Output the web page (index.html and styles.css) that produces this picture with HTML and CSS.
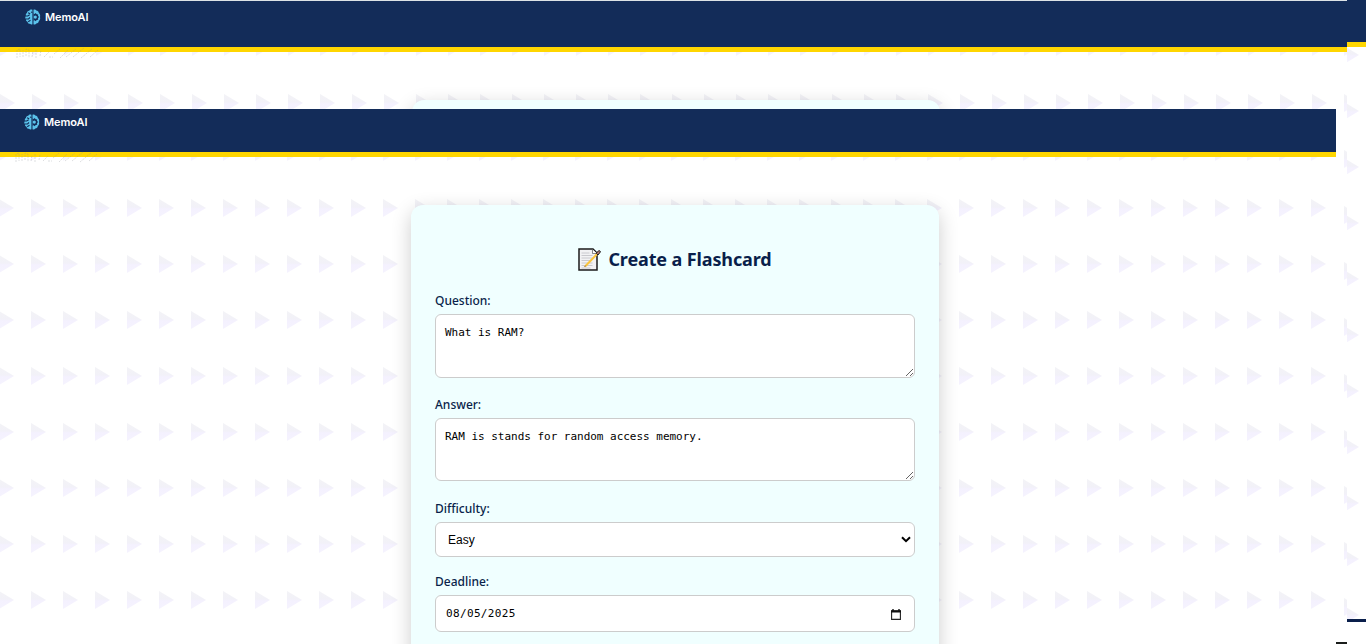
FILE: index.html
```
<!DOCTYPE html>
<html lang="en">
<head>
<meta charset="utf-8">
<title>MemoAI</title>
<link rel="stylesheet" href="styles.css">
</head>
<body>
<svg class="defs" width="0" height="0" aria-hidden="true">
  <defs>
    <linearGradient id="tri" x1="0" y1="0" x2="0" y2="1"><stop offset="0" stop-color="#f3f3f6"/><stop offset=".45" stop-color="#f2f1f8"/><stop offset=".55" stop-color="#f4f1fe"/><stop offset="1" stop-color="#f5f3fe"/></linearGradient>
    <pattern id="tiles" width="32" height="56" patternUnits="userSpaceOnUse"><path d="M0 38L15 47L0 56Z" fill="url(#tri)"/></pattern>
    <symbol id="brain" viewBox="0 0 16 16">
      <path d="M7.400.8C6.200 0 4.800.6 4.300 1.800 2.900 1.700 1.900 2.800 2 4.100.8 4.800.5 6 1 7c-1 .8-.9 2.200 0 3-.3 1.300.3 2.400 1.500 2.800.2 1.400 1.300 2.200 2.500 2 .7.8 1.700 1 2.400.5z" fill="#5bc2eb"/>
      <path d="M3 3.700l2.200 1M.5 7h2.200l2-1.200M1 10h2.500l1.500-1.500M3.200 12.700l2.300-1.400M7.400 3.500L6 3" fill="none" stroke="#132c59" stroke-width="1.100"/>
      <path d="M8.500.8c1-.6 2.300-.3 2.800.7 1.400 0 2.500 1 2.500 2.400 1.200.8 1.700 2.500 1.200 4.100.5 1.600 0 3.300-1.200 4.100 0 1.400-1.100 2.400-2.500 2.400-.5 1-1.800 1.300-2.800.7z" fill="#5bc2eb"/>
      <path d="M8.500 4.500l1.200.5 1-1 1 1.300 1.500.2-.2 1.600 1.200 1-1.200 1 .2 1.600-1.500.200-1 1.300-1-1-1.200.5z" fill="#132c59"/>
      <circle cx="10.300" cy="8.100" r="1.600" fill="#5bc2eb"/>
    </symbol>
    <symbol id="residue" viewBox="0 0 84 12">
      <path d="M1 11V3l3-1v8M7 10V3M10 9V2l3 1v8M16 10l1-6M20 11V3M24 9l1-6M28 10l5-5M33 10h4M38 7l6-5M44 11l8-8M50 10l10-8M57 10l11-9M65 11l11-9M74 10l8-7" fill="none" stroke="#8d9298" stroke-opacity=".3" stroke-width="1" stroke-dasharray="2 1"/>
    </symbol>
  </defs>
</svg>

<div class="layer layer-back">
  <svg class="tiles"><rect width="100%" height="100%" fill="url(#tiles)"/></svg>
  <header class="bar"></header>
  <div class="edge"></div>
</div>

<div class="layer layer-mid">
  <svg class="tiles"><rect width="100%" height="100%" fill="url(#tiles)"/></svg>
  <header class="bar"><svg class="logo"><use href="#brain"/></svg><span>MemoAI</span></header>
  <svg class="residue"><use href="#residue"/></svg>
  <main class="card"></main>
  <div class="edge"></div>
</div>

<div class="layer layer-front">
  <svg class="tiles"><rect width="100%" height="100%" fill="url(#tiles)"/></svg>
  <header class="bar"><svg class="logo"><use href="#brain"/></svg><span>MemoAI</span></header>
  <svg class="residue"><use href="#residue"/></svg>
  <main class="card">
    <h1 class="title">
      <svg class="memo" viewBox="0 0 23 23">
        <path d="M1 1h14l4 4v17H1z" fill="#f2f2f4" stroke="#1b1b1b" stroke-width="1.500"/>
        <path d="M14.500 1.500v4H19" fill="#fff" stroke="#555" stroke-width=".7"/>
        <path d="M3.500 5h8M3.500 7.500h11M3.500 10h11M3.500 12.500h10M3.500 15h11M3.500 17.500h11M3.500 20h9" stroke="#c4c4c9" stroke-width=".9"/>
        <path d="M20.500 4.500L9 16.500l-2 2" fill="none" stroke="#fbc53c" stroke-width="2"/>
        <path d="M7.600 17.600L6.500 19" stroke="#8a6c55"/>
        <path d="M18.300 5.300l2.200-2.500q1.500-.6 2 1L20 7z" fill="#b87d78" stroke="#1b1b1b" stroke-width="1"/>
      </svg>
      <span>Create a Flashcard</span>
    </h1>
    <label class="label" for="q">Question:</label>
    <textarea class="field area" id="q" spellcheck="false">What is RAM?</textarea>
    <label class="label" for="a">Answer:</label>
    <textarea class="field area area-answer" id="a" spellcheck="false">RAM is stands for random access memory.</textarea>
    <div class="label">Difficulty:</div>
    <div class="field select"><span>Easy</span><svg class="chevron" viewBox="0 0 10 7"><path d="M1 1.200l4 4 4-4" fill="none" stroke="#000" stroke-width="2"/></svg></div>
    <div class="label">Deadline:</div>
    <div class="field date"><span>08/05/2025</span><svg class="calendar" viewBox="0 0 10 11"><path d="M.6 2h8.800v8.400H.6z" fill="none" stroke="#222" stroke-width="1.100"/><path d="M0 1.200h10v2.300H0zM1.300 0h1.400v2H1.300zM7.300 0h1.400v2H7.300z" fill="#111"/></svg></div>
  </main>
</div>
</body>
</html>
```
FILE: styles.css
```
* { box-sizing: border-box; }
body { margin: 0; width: 1366px; height: 644px; position: relative; overflow: hidden; background: #fff; font-family: "Noto Sans", "Open Sans", sans-serif; }
.defs { position: absolute; }

/* Stacked page layers */
.layer { position: absolute; left: 0; overflow: hidden; background: #fff; }
.layer-back { top: 0; width: 1366px; height: 644px; }
.layer-mid { top: 0; width: 1347px; height: 644px; border-top: 1px solid #dde3e6; }
.layer-front { top: 109px; width: 1336px; height: 535px; }

.tiles { position: absolute; left: 0; width: 1400px; height: 700px; }
.layer-back .tiles { top: 8px; }
.layer-mid .tiles { top: -1px; }
.layer-front .tiles { top: -4px; left: -1px; }

.bar { position: relative; display: flex; align-items: flex-start; gap: 4px; height: 51px; padding: 8px 0 0 25px; background: #132c59; border-bottom: 5px solid #ffd600; color: #fff; font: 600 11px/16px Inter, sans-serif; letter-spacing: -.1px; }
.layer-back .bar { height: 47px; }
.layer-front .bar { height: 48px; padding: 5px 0 0 24px; }
.logo { width: 16px; height: 16px; }
.residue { position: absolute; left: 16px; top: 46px; width: 84px; height: 12px; }
.layer-front .residue { left: 15px; top: 42px; }

.edge { position: absolute; right: 0; }
.layer-back .edge { width: 19px; top: 619px; height: 25px; border-top: 3px solid #0a1f4b; background: #fff; }
.layer-mid .edge { width: 11px; top: 641px; height: 2px; background: #1a1d1b; }

.card { position: relative; width: 528px; height: 600px; margin: 48px 0 0 411px; padding: 40px 24px; border-radius: 12px; background: #f0ffff; box-shadow: 0 6px 20px rgba(0, 0, 0, .2); color: #0a1f4b; }
.layer-mid .card { margin-left: 412px; }

.title { display: flex; justify-content: center; align-items: center; gap: 7px; height: 28px; margin: 0 0 18px; font-size: 18px; line-height: 28px; font-weight: 700; white-space: nowrap; letter-spacing: -.12px; }
.memo { width: 23px; height: 23px; }
.label { display: block; height: 20px; margin-bottom: 3px; font-size: 12px; line-height: 20px; font-weight: 500; }
.field { display: flex; align-items: center; justify-content: space-between; width: 480px; border: 1px solid #ccc; border-radius: 6px; background: #fff; color: #000; }
.area { display: block; height: 64px; margin: 0 0 17px; padding: 10px 9px 8px; font: 11px/16px "DejaVu Sans Mono", monospace; letter-spacing: -.02px; resize: vertical; outline: none; }
.area-answer { height: 63px; margin-bottom: 18px; }
.select { height: 35px; padding: 0 3px 0 12px; font: 12px/16px "Liberation Sans", sans-serif; margin-bottom: 15px; }
.chevron { width: 10px; height: 7px; }
.date { height: 37px; padding: 1px 13px 0 10px; font: 11px/16px "DejaVu Sans Mono", monospace; letter-spacing: .35px; }
.calendar { width: 10px; height: 11px; }
```
